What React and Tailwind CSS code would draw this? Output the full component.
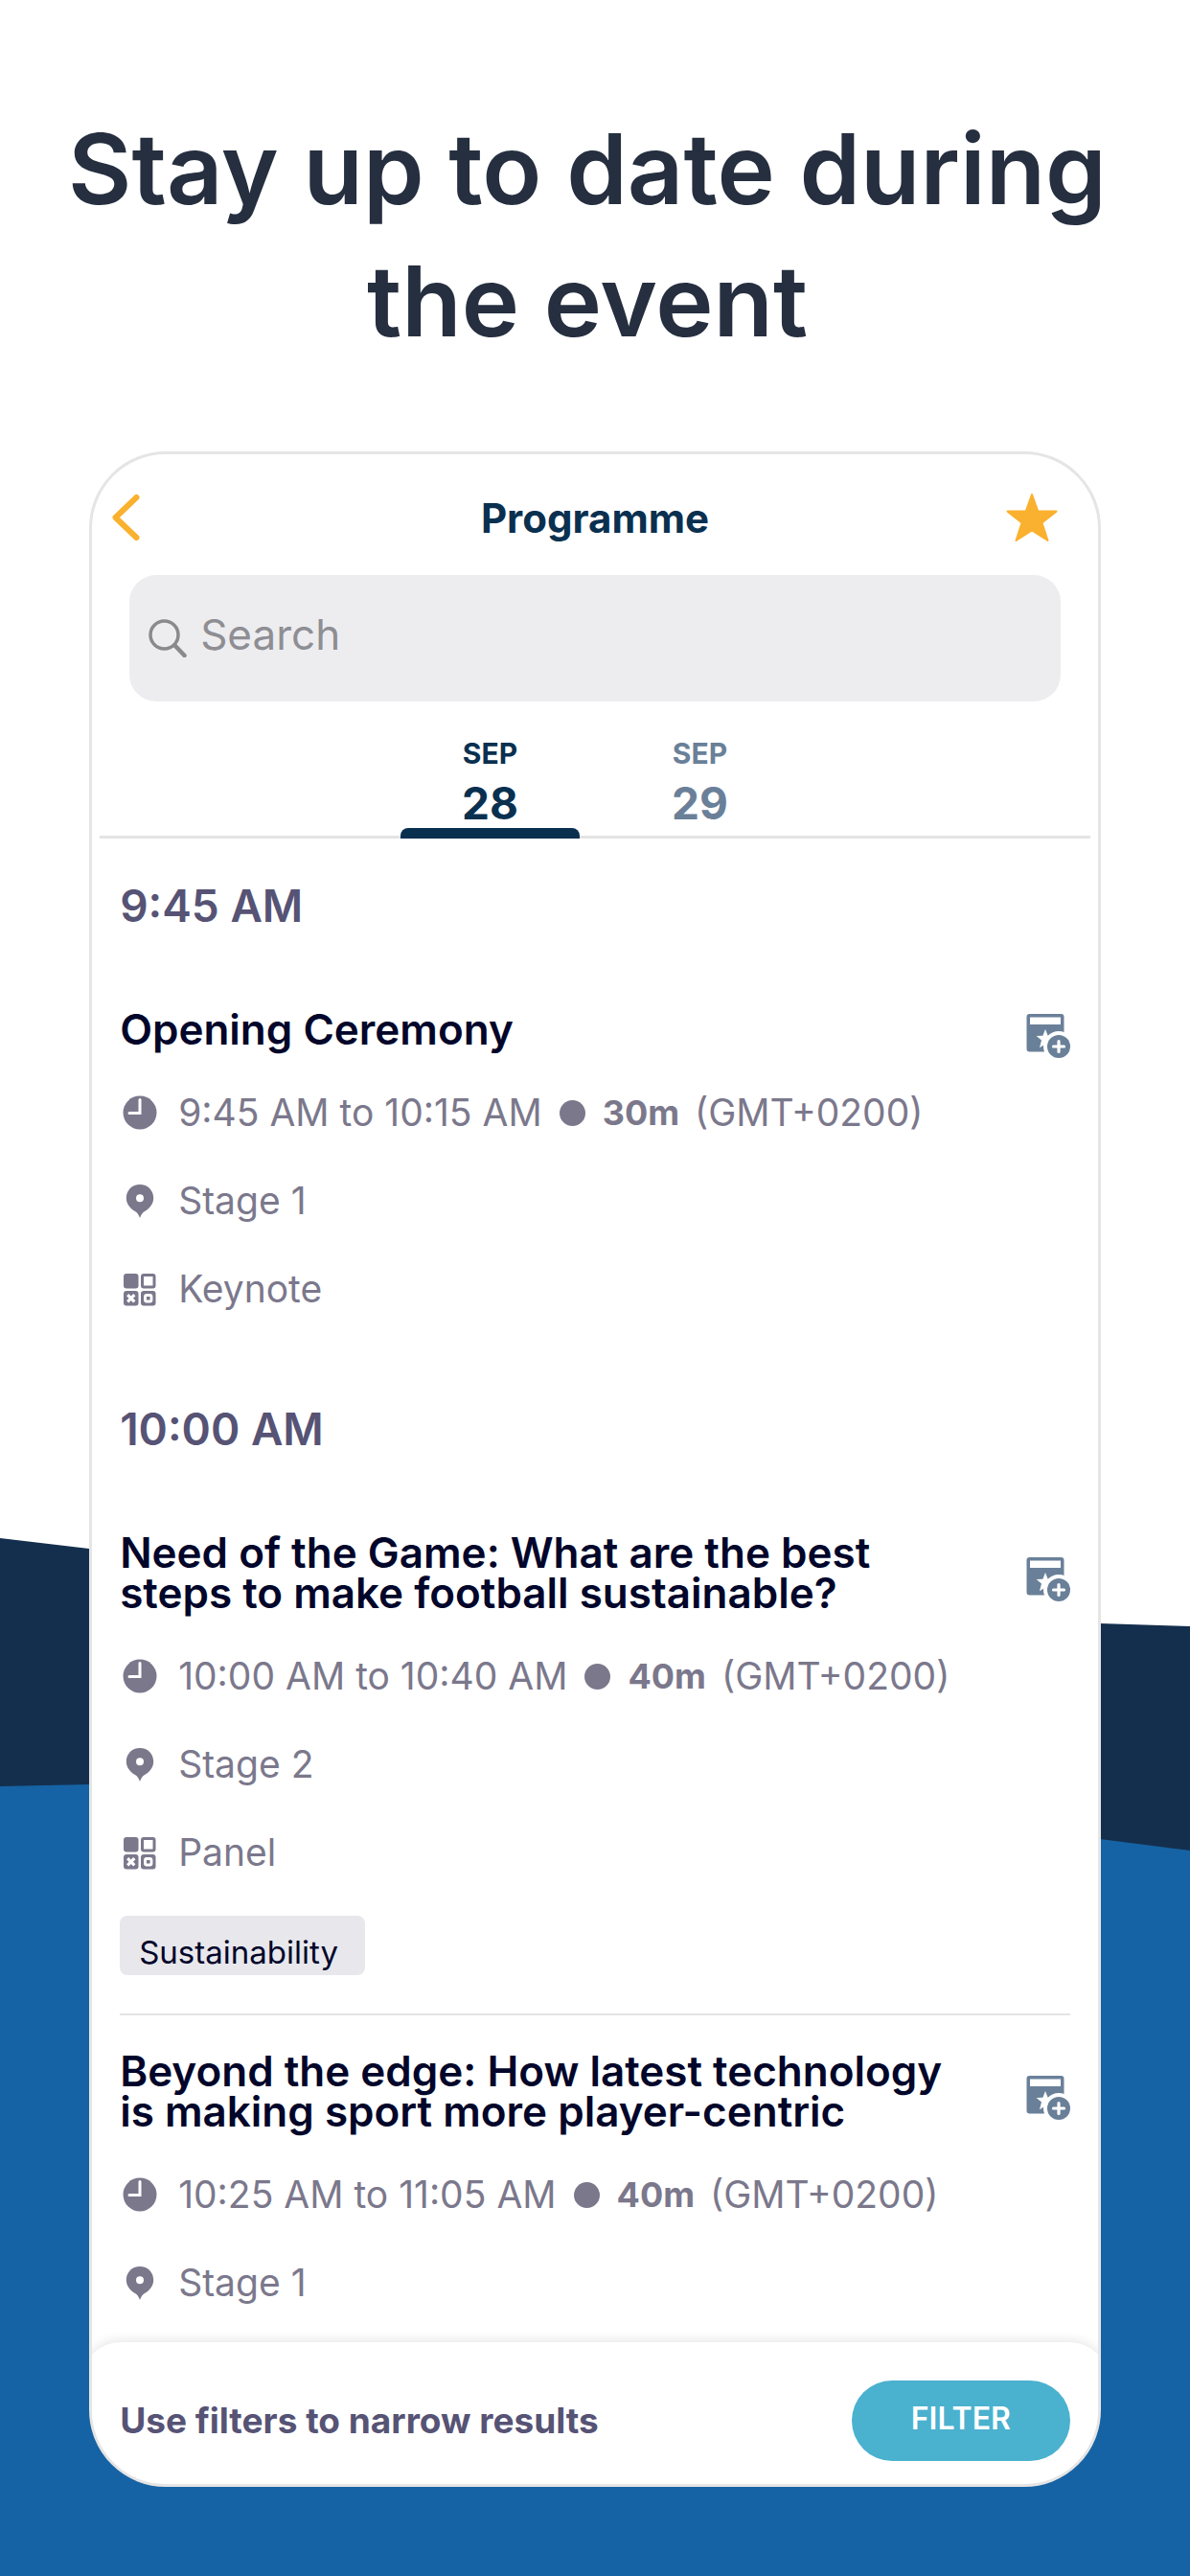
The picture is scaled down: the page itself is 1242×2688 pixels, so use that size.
import React, { useState } from "react";

const days = [
  { id: "sep-28", month: "SEP", day: "28" },
  { id: "sep-29", month: "SEP", day: "29" }
];

const slots = [
  {
    time: "9:45 AM",
    sessions: [
      { title: "Opening Ceremony", from: "9:45 AM", to: "10:15 AM", length: "30m", stage: "Stage 1", type: "Keynote" }
    ]
  },
  {
    time: "10:00 AM",
    sessions: [
      {
        title: "Need of the Game: What are the best steps to make football sustainable?",
        from: "10:00 AM",
        to: "10:40 AM",
        length: "40m",
        stage: "Stage 2",
        type: "Panel",
        tag: "Sustainability"
      },
      {
        title: "Beyond the edge: How latest technology is making sport more player-centric",
        from: "10:25 AM",
        to: "11:05 AM",
        length: "40m",
        stage: "Stage 1"
      }
    ]
  }
];

export default function App() {
  const [activeDay, setActiveDay] = useState("sep-28");
  const [query, setQuery] = useState("");

  return (
    <div className="relative isolate min-h-screen overflow-hidden bg-white px-[7.5%] pb-[93px] font-['Inter',sans-serif]">
      <Backdrop />
      <h1 className="-mr-12 -ml-16 pt-[107px] text-center text-[102px] leading-[138px] font-semibold text-[#262f3f]">
        Stay up to date during <br /> the event
      </h1>

      <main className="mt-[88px] overflow-hidden rounded-[80px] border-[3px] border-[#e5e5e5] bg-white">
        <header className="grid h-[126px] grid-cols-[1fr_auto_1fr] items-center pt-1.5">
          <button aria-label="Back" className="ml-5 justify-self-start">
            <svg viewBox="0 0 30 50" className="h-[50px] w-[30px]" fill="none" stroke="#fab12f" strokeWidth="6" strokeLinecap="round" strokeLinejoin="round">
              <path d="M26.5 4 4.5 25l22 21" />
            </svg>
          </button>
          <h2 className="pt-0.5 text-[42px] leading-[48px] font-bold text-[#0a3050]">Programme</h2>
          <button aria-label="Favourites" className="mr-[42px] justify-self-end">
            <svg viewBox="0 0 54 52" className="h-[52px] w-[54px]" fill="#fab12f" stroke="#fab12f" strokeWidth="2" strokeLinejoin="round">
              <path d="m27 2 6.3 17.6h19.2l-15 11.9L43.5 50 27 39.5 10.5 50l6-18.5-15-11.9h19.2z" />
            </svg>
          </button>
        </header>

        <label className="mx-[39px] flex h-[132px] items-center gap-3.5 rounded-[28px] bg-[#ededf0] px-5">
          <SearchIcon />
          <input
            type="text"
            aria-label="Search"
            placeholder="Search"
            value={query}
            onChange={(event) => setQuery(event.target.value)}
            className="min-w-0 flex-1 bg-transparent pb-2 text-[44px] leading-[52px] text-[#3c3c43] outline-none placeholder:text-[#8e8e93]"
          />
        </label>

        <nav className="mx-2 flex justify-center gap-8 border-b-[3px] border-[#e4e4e4] pt-9">
          {days.map((item) => (
            <DayTab key={item.id} item={item} active={item.id === activeDay} onSelect={() => setActiveDay(item.id)} />
          ))}
        </nav>

        <div className="px-[29px] pb-10">
          {slots.map((slot, index) => (
            <section key={slot.time} className={index === 0 ? "pt-[42px]" : "pt-24"}>
              <h3 className="mb-20 text-[46px] leading-[56px] font-semibold text-[#565375]">{slot.time}</h3>
              <div className="divide-y-2 divide-[#e4e4e4]">
                {slot.sessions.map((session) => <Session key={session.title} session={session} />)}
              </div>
            </section>
          ))}
        </div>

        <footer className="-mx-3 flex items-center justify-between rounded-t-[42px] bg-white px-[41px] pt-10 pb-6 shadow-[0_-2px_12px_rgba(0,0,0,0.1)]">
          <p className="text-[37px] leading-[44px] font-bold text-[#565375]">Use filters to narrow results</p>
          <button className="h-[84px] w-[228px] rounded-full bg-[#4ab1cf] pb-1 text-[32px] leading-[36px] font-semibold text-white">FILTER</button>
        </footer>
      </main>
    </div>
  );
}

function DayTab({ item, active, onSelect }) {
  return (
    <button onClick={onSelect} className={`-mb-[3px] flex w-[187px] flex-col items-center ${active ? "text-[#0a3050]" : "text-[#6a8099]"}`}>
      <span className="text-[30px] leading-[36px] font-bold">{item.month}</span>
      <span className="mt-2 text-[46px] leading-[52px] font-bold">{item.day}</span>
      <span className={`h-[11px] w-full rounded-t-lg ${active ? "bg-[#0a3050]" : "bg-transparent"}`} />
    </button>
  );
}

function Session({ session }) {
  return (
    <article className="pt-[37px] pb-10 first:pt-0 last:pb-0">
      <div className="flex items-center justify-between gap-6">
        <h4 className="max-w-[880px] text-[44px] leading-[42px] font-semibold text-[#02062a]">{session.title}</h4>
        <button aria-label="Add to my programme" className="-my-3 shrink-0 pt-3.5">
          <AddSessionIcon />
        </button>
      </div>
      <div className="mt-11 grid gap-12 text-[39px] leading-[44px] text-[#7b788c]">
        <MetaRow icon={<ClockIcon />}>
          <span>{session.from} to {session.to}</span>
          <span className="mx-[18px] size-[27px] rounded-full bg-[#7b788c]" />
          <strong className="text-[36px] font-bold">{session.length}</strong>
          <span className="ml-4">(GMT+0200)</span>
        </MetaRow>
        <MetaRow icon={<PinIcon />}>{session.stage}</MetaRow>
        {session.type && <MetaRow icon={<TypeIcon />}>{session.type}</MetaRow>}
      </div>
      {session.tag && (
        <span className="mt-11 block w-fit rounded-lg bg-[#e8e7ec] pt-5 pr-7 pb-1.5 pl-5 text-[33px] leading-[36px] text-[#02062a]">{session.tag}</span>
      )}
    </article>
  );
}

function MetaRow({ icon, children }) {
  return (
    <div className="flex items-center">
      <span className="mr-[22px] ml-[3px]">{icon}</span>
      {children}
    </div>
  );
}

function SearchIcon() {
  return (
    <svg viewBox="0 0 40 40" className="size-10 shrink-0" fill="none" stroke="#8a8a8e" strokeLinecap="round">
      <circle cx="16.5" cy="16.5" r="14.5" strokeWidth="3.5" />
      <path d="m27.5 27.5 10 10.5" strokeWidth="4.5" />
    </svg>
  );
}

function ClockIcon() {
  return (
    <svg viewBox="0 0 36 36" className="size-9" fill="none">
      <circle cx="18" cy="18" r="17.5" fill="#7b788c" />
      <path d="M18 4.5v14H7" stroke="#fff" strokeWidth="3" strokeLinecap="round" />
    </svg>
  );
}

function PinIcon() {
  return (
    <svg viewBox="0 0 36 36" className="size-9" fill="#7b788c">
      <path fillRule="evenodd" d="M18 1C9.8 1 3.8 7.2 3.8 15c0 7 4.700 11.300 9.200 14 2 1.200 3.700 3.200 5 7 1.300-3.800 3-5.800 5-7 4.500-2.700 9.200-7 9.200-14C32.200 7.200 26.200 1 18 1Zm0 10.300a4 4 0 1 1 0 8 4 4 0 0 1 0-8Z" />
    </svg>
  );
}

function TypeIcon() {
  return (
    <svg viewBox="0 0 36 36" className="size-9" fill="none" stroke="#7b788c" strokeWidth="3">
      <rect x="1" y="2" width="15.5" height="15.5" rx="3" fill="#7b788c" stroke="none" />
      <rect x="20.5" y="3.5" width="12.5" height="12.5" rx="1.5" />
      <rect x="1" y="20" width="15.5" height="15.5" rx="3" fill="#7b788c" stroke="none" />
      <path d="m5.200 24.200 7.100 7.100m0-7.100-7.100 7.100" stroke="#fff" strokeWidth="3.2" />
      <rect x="19" y="20" width="15.5" height="15.5" rx="3" fill="#7b788c" stroke="none" />
      <rect x="23.5" y="24.5" width="6.5" height="6.5" rx="1.5" stroke="#fff" strokeWidth="2.8" />
    </svg>
  );
}

function AddSessionIcon() {
  return (
    <svg viewBox="0 0 46 46" className="size-[46px]" fill="#6a8099">
      <path fillRule="evenodd" d="M3.500 0h33A3 3 0 0 1 39.500 3v33.500a3 3 0 0 1-3 3h-33a3 3 0 0 1-3-3V3a3 3 0 0 1 3-3ZM4 3.500v7.500h32V3.500Z" />
      <path fill="#fff" d="m20 16 2.700 6.700 6.800.4-5.200 4.500 1.600 7.500-5.900-3.500-6 3.700 2-7.800-5.300-4.400 6.700-.4z" />
      <circle cx="34" cy="34" r="16" fill="#fff" />
      <circle cx="34" cy="34" r="12" />
      <path d="M34 28.500v11M28.500 34h11" stroke="#fff" strokeWidth="3.2" strokeLinecap="round" />
    </svg>
  );
}

function Backdrop() {
  return (
    <svg viewBox="0 0 1242 2688" preserveAspectRatio="none" className="absolute inset-0 -z-10 size-full" aria-hidden="true">
      <path d="M0 1605 93 1616 700 1684 1148 1694 1242 1697V2688H0Z" fill="#142f4d" />
      <path d="M0 1864 93 1862 600 1850 1148 1919 1242 1931V2688H0Z" fill="#1563a4" />
    </svg>
  );
}
